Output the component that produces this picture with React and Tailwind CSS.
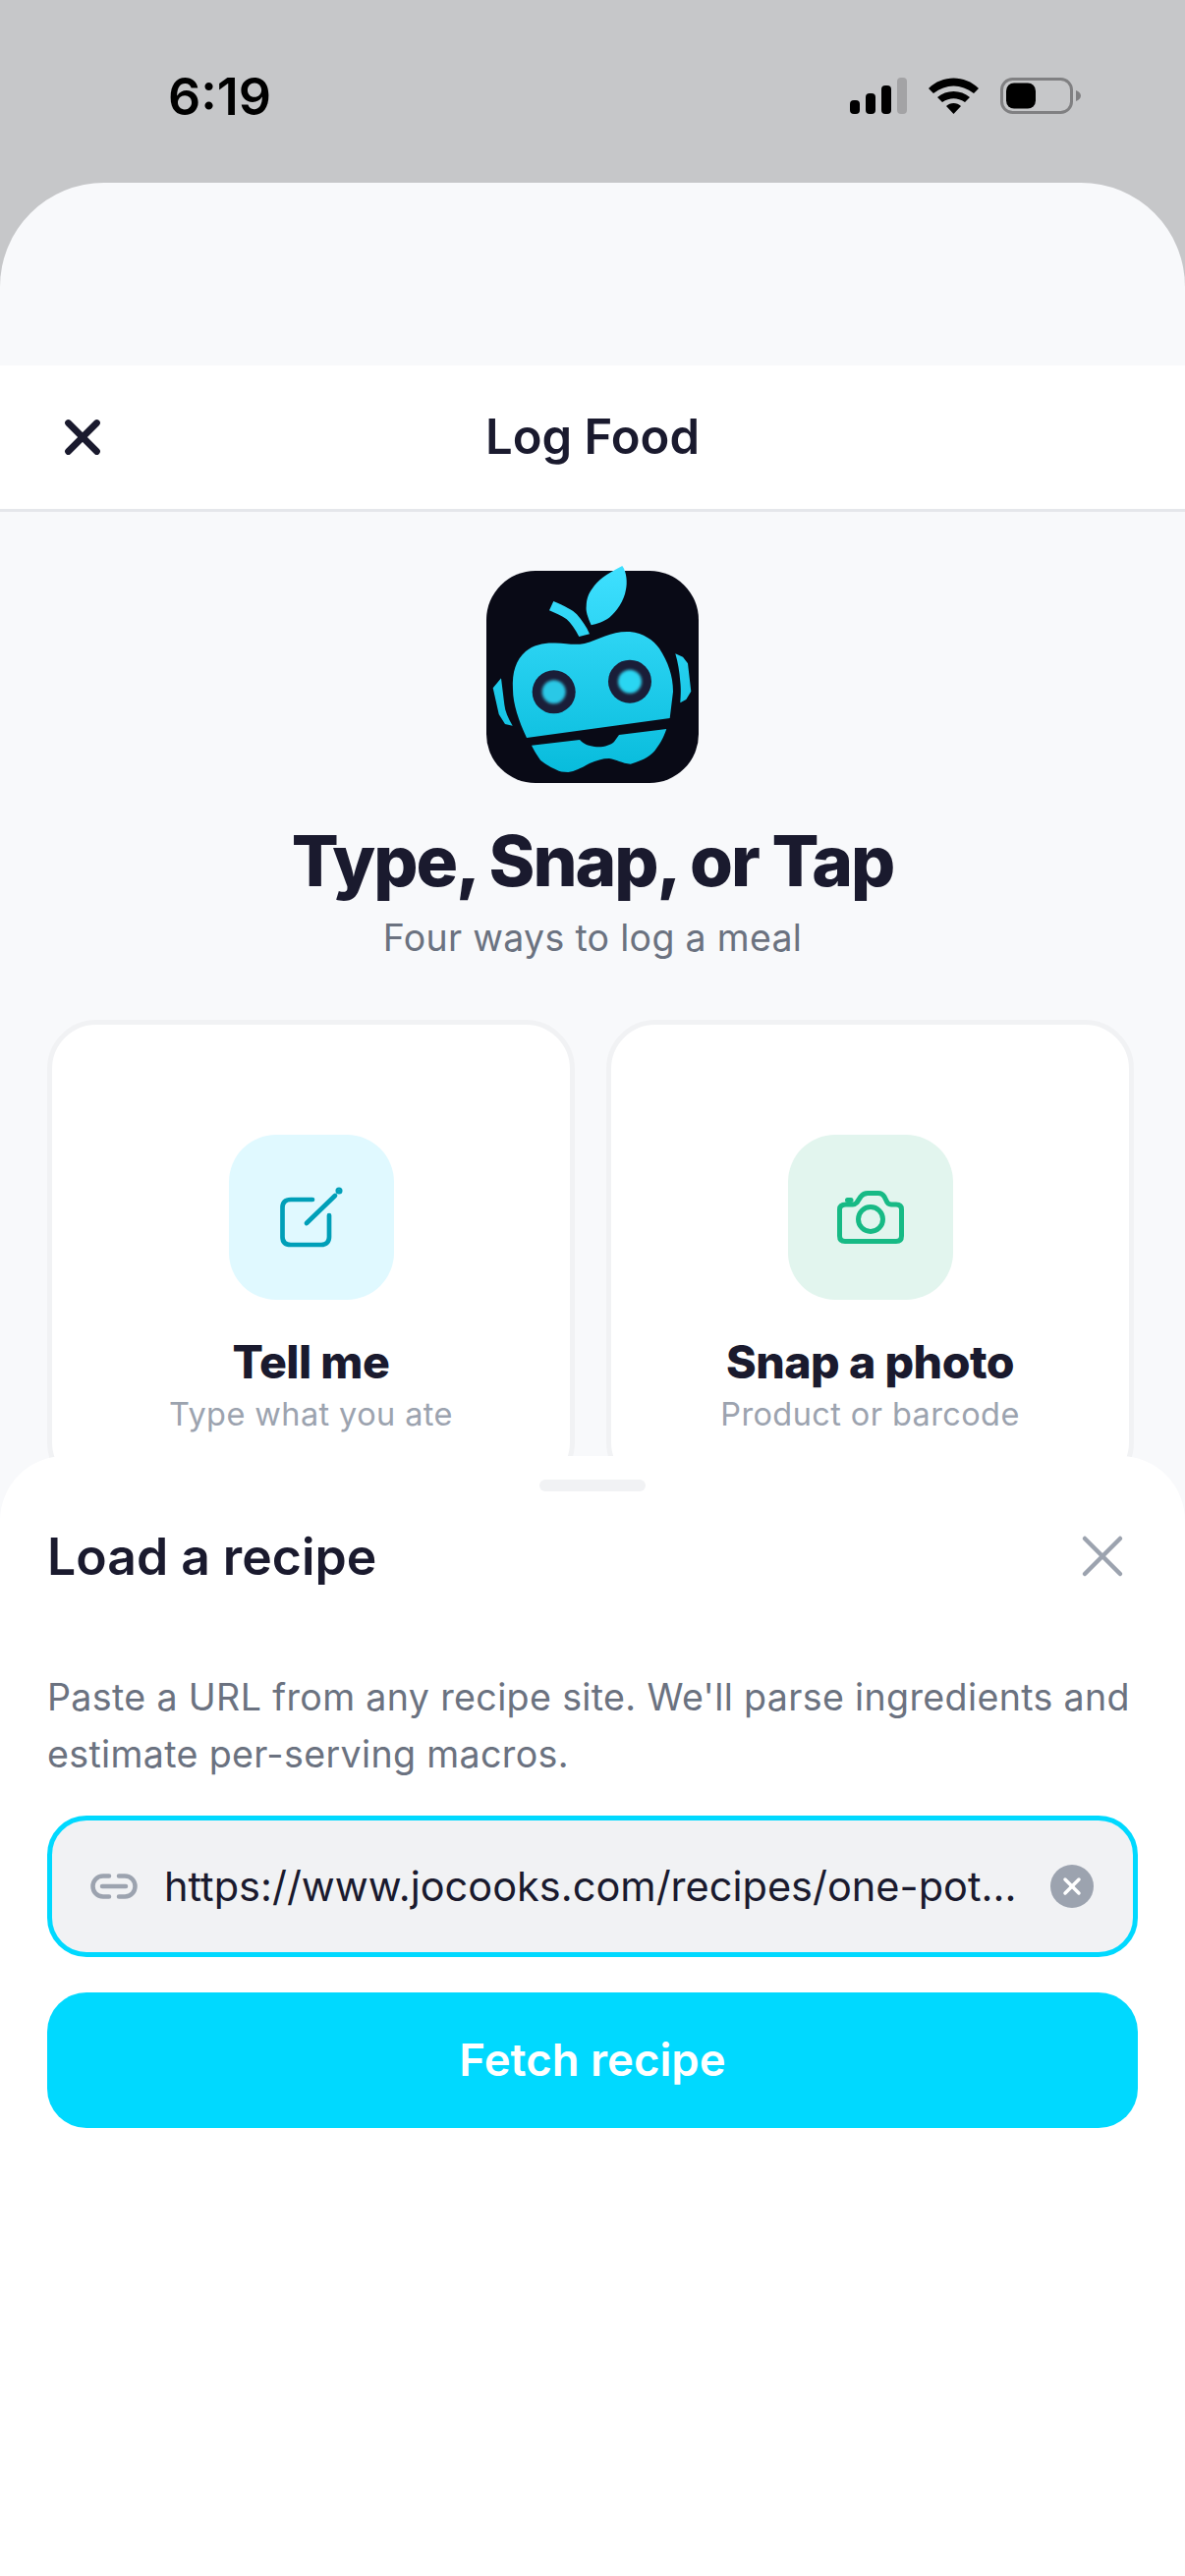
import React from 'react';
import { X } from 'lucide-react';

const INK = 'text-[#1a1a2e]';

function StatusIcons() {
  return (
    <div className="flex items-center gap-[22px]">
      <svg width="58" height="37" viewBox="0 0 58 37">
        <rect x="0" y="23" width="10" height="14" rx="4" fill="#000" />
        <rect x="16" y="16" width="10" height="21" rx="4" fill="#000" />
        <rect x="32" y="8" width="10" height="29" rx="4" fill="#000" />
        <rect x="48" y="0" width="10" height="37" rx="4" fill="#a3a3a5" />
      </svg>
      <svg width="51" height="37" viewBox="0 0 51 37">
        <path d="M0 11 C14 -3 37 -3 51 11 L46 16 C33 6 18 6 5 16 Z" fill="#000" />
        <path d="M9 20 C18 12 33 12 42 20 L37 25 C29 20 22 20 14 25 Z" fill="#000" />
        <path d="M18 29 C22 25 29 25 33 29 L25.5 37 Z" fill="#000" />
      </svg>
      <svg width="82" height="37" viewBox="0 0 82 37">
        <rect x="1.5" y="1.5" width="71" height="34" rx="11" fill="none" stroke="#808082" strokeWidth="3" />
        <rect x="6" y="5.5" width="30" height="26" rx="8" fill="#000" />
        <path d="M77 13 C80 14 82 16 82 18.5 C82 21 80 23 77 24 Z" fill="#808082" />
      </svg>
    </div>
  );
}

function Logo() {
  return (
    <svg width="216" height="221" viewBox="0 0 216 221" className="block">
      <defs>
        <linearGradient id="appleFill" gradientUnits="userSpaceOnUse" x1="0" y1="0" x2="0" y2="210">
          <stop offset="0" stopColor="#3fe0ff" />
          <stop offset="1" stopColor="#08bcdc" />
        </linearGradient>
        <filter id="eyeBlur" x="-30%" y="-30%" width="160%" height="160%">
          <feGaussianBlur stdDeviation="1.6" />
        </filter>
      </defs>
      <rect x="0" y="5" width="216" height="216" rx="50" fill="#090a16" />
      {/* leaf and stem */}
      <path d="M138.3 0 C143 6 143.5 18 142 24 C140 36 133 46 125 52.7 C119 57 112 59 106.7 60.3 C103 52 101 46 101.7 41 C102 33 104 28 108 22.7 C113 15 121 9 138.3 0 Z" fill="url(#appleFill)" />
      <path d="M68.3 36 C80 41 88 45 92 49.3 C97 55 102 62 105 69.3 L94.3 72 C90 64 86 58 81.7 54.3 C76 50 70 48 64 45.3 Z" fill="url(#appleFill)" />
      {/* upper head */}
      <path d="M41 175 C33 158 27 140 27 126 C26 108 30 96 40 87 C48 80 60 78 70 78.5 C82 79 90 81 100 79 C115 75 128 66 146 67 C160 68 170 76 176 84 C185 98 190 112 190 128 L186.7 155 Z" fill="url(#appleFill)" />
      {/* jaw with mouth notch */}
      <path d="M46 182.7 L95 177 C99 181 103 183 110 184 C118 185 126 183 130 179 L135 172 L183.3 166 C180 176 176 182 171.7 187.7 C167 193 162 197 146.7 201.7 C138 201 132 197 125 196 C118 196 112 198 105 201 C96 206 90 209 83.3 210 C78 210 74 209 71.7 207.7 C63 204 58 200 55 197.7 C51 192 48 187 46 182.7 Z" fill="url(#appleFill)" />
      {/* eyes */}
      <circle cx="68.7" cy="128.3" r="22" fill="#1a1e38" />
      <circle cx="68.7" cy="128.3" r="12" fill="#2cc8e6" filter="url(#eyeBlur)" />
      <circle cx="146" cy="117.7" r="22" fill="#1a1e38" />
      <circle cx="146" cy="117.7" r="12" fill="#2cd6f2" filter="url(#eyeBlur)" />
      {/* ears */}
      <path d="M15 114.3 L6.7 124.3 L12.7 151 L19 161 L26.7 162.7 C22 155 19 148 18.3 141 Z" fill="url(#appleFill)" />
      <path d="M192.3 89.3 L200 92.7 L205 99.3 L208.3 127.7 L203.3 136 L197.3 139.3 C198 130 198 124 197.3 117.7 C196.5 108 195 98 192.3 89.3 Z" fill="url(#appleFill)" />
    </svg>
  );
}

function OptionCard({ tint, title, subtitle, children }) {
  return (
    <div className="flex-1 h-[480px] bg-white border-[5px] border-[#f1f2f4] rounded-[50px] flex flex-col items-center pt-[112px]">
      <div className={`w-[168px] h-[168px] shrink-0 rounded-[48px] flex items-center justify-center ${tint}`}>
        {children}
      </div>
      <p className={`text-[46.5px] leading-[56px] font-extrabold mt-[35px] tracking-[-0.5px] ${INK}`}>{title}</p>
      <p className="text-[32.5px] leading-[42px] text-[#9ca3af] mt-[5px] tracking-[0.4px]">{subtitle}</p>
    </div>
  );
}

export default function App() {
  return (
    <div className="w-[1206px] h-[2622px] bg-[#c6c7c9] overflow-hidden flex flex-col font-['Inter',sans-serif]">
      {/* Status bar */}
      <div className="h-[186px] shrink-0 flex items-start justify-between pl-[171px] pr-[106px] pt-[70px]">
        <span className="text-[52px] leading-[58px] font-semibold text-black">6:19</span>
        <div className="pt-[9px]"><StatusIcons /></div>
      </div>

      <div className="flex-1 bg-[#f8f9fb] rounded-t-[106px] flex flex-col relative">
        <div className="h-[186px] shrink-0" />

        {/* Nav bar */}
        <div className="h-[149px] shrink-0 bg-white border-b-[3px] border-[#e5e7eb] grid grid-cols-[1fr_auto_1fr] items-center">
          <X size={58} strokeWidth={2.8} className="text-[#1a1a2e] ml-[55px]" />
          <h1 className={`text-[49px] font-semibold ${INK}`}>Log Food</h1>
          <div />
        </div>

        {/* Hero */}
        <div className="flex flex-col items-center pt-[55px]">
          <Logo />
          <h2 className={`text-[71px] leading-[84px] font-extrabold tracking-[-2px] mt-[37px] ${INK}`}>Type, Snap, or Tap</h2>
          <p className="text-[37.5px] leading-[50px] text-[#6b7280] mt-[12px] tracking-[0.3px]">Four ways to log a meal</p>
        </div>

        {/* Options */}
        <div className="flex gap-[32px] pl-[48px] pr-[52px] mt-[58px]">
          <OptionCard tint="bg-[#e0f9ff]" title="Tell me" subtitle="Type what you ate">
            <svg width="64" height="62" viewBox="0 0 64 62" fill="none" stroke="#009fb8" strokeWidth="4.7" strokeLinecap="round" strokeLinejoin="round">
              <path d="M33 13 H11 C5 13 2.5 16 2.5 21 V51 C2.5 56 5 59 11 59 H42 C47 59 50 56 50 51 V29" />
              <path d="M27 37 L56 9" />
              <circle cx="60" cy="4" r="1.2" fill="#009fb8" />
            </svg>
          </OptionCard>
          <OptionCard tint="bg-[#e2f5ee]" title="Snap a photo" subtitle="Product or barcode">
            <svg width="68" height="54" viewBox="0 0 68 54" fill="none" stroke="#17ba85" strokeWidth="5" strokeLinejoin="round" strokeLinecap="round">
              <path d="M9 14 H16 C18 14 19 13 20 12 L24 6 C26 3.5 28 2.5 31 2.5 H42 C45 2.5 46.5 3.5 48 6 L50 10 C51 13 52.5 14 55 14 H60 C64 14 65.5 16 65.5 19 V46 C65.5 50 63.5 51.5 60 51.5 H8 C4.5 51.5 2.5 50 2.5 46 V19 C2.5 16 4.5 14 9 14 Z" />
              <path d="M10.5 9.5 H14" />
              <circle cx="34" cy="29" r="12.5" />
            </svg>
          </OptionCard>
        </div>

        {/* Bottom sheet */}
        <div className="absolute left-0 right-0 top-[1296px] bottom-0 bg-white rounded-t-[66px] flex flex-col px-[48px]">
          <div className="w-[108px] h-[12px] rounded-full bg-[#f1f2f4] mx-auto mt-[24px] shrink-0" />
          <div className="flex items-center justify-between mt-[33px]">
            <h3 className={`text-[51.7px] leading-[66px] font-semibold ${INK}`}>Load a recipe</h3>
            <X size={72} strokeWidth={1.5} className="text-[#9ca3af] -my-[4px]" />
          </div>
          <p className="text-[37.6px] leading-[58px] text-[#6b7280] mt-[82px] tracking-[0.35px] whitespace-nowrap">
            Paste a URL from any recipe site. We'll parse ingredients and<br />estimate per-serving macros.
          </p>
          <div className="h-[144px] mt-[33px] rounded-[40px] border-[5px] border-[#00d9ff] bg-[#f1f2f4] flex items-center pl-[39px] pr-[40px]">
            <svg width="48" height="26" viewBox="0 0 48 26" fill="none" stroke="#9ca3af" strokeWidth="4.5" strokeLinecap="round" className="shrink-0">
              <path d="M19 2.5 H13 C6.5 2.5 2.5 7.5 2.5 13 C2.5 18.5 6.5 23.5 13 23.5 H19" />
              <path d="M29 2.5 H35 C41.5 2.5 45.5 7.5 45.5 13 C45.5 18.5 41.5 23.5 35 23.5 H29" />
              <path d="M12 13 H36" />
            </svg>
            <span className={`ml-[27px] flex-1 min-w-0 text-[41.5px] whitespace-nowrap overflow-hidden ${INK}`}>https://www.jocooks.com/recipes/one-pot...</span>
            <div className="w-[44px] h-[44px] rounded-full bg-[#9ca3af] flex items-center justify-center shrink-0">
              <X size={28} strokeWidth={3} className="text-white" />
            </div>
          </div>
          <div className="h-[138px] mt-[36px] rounded-[40px] bg-[#00d9ff] flex items-center justify-center">
            <span className="text-[45.5px] font-semibold text-white">Fetch recipe</span>
          </div>
        </div>
      </div>
    </div>
  );
}
